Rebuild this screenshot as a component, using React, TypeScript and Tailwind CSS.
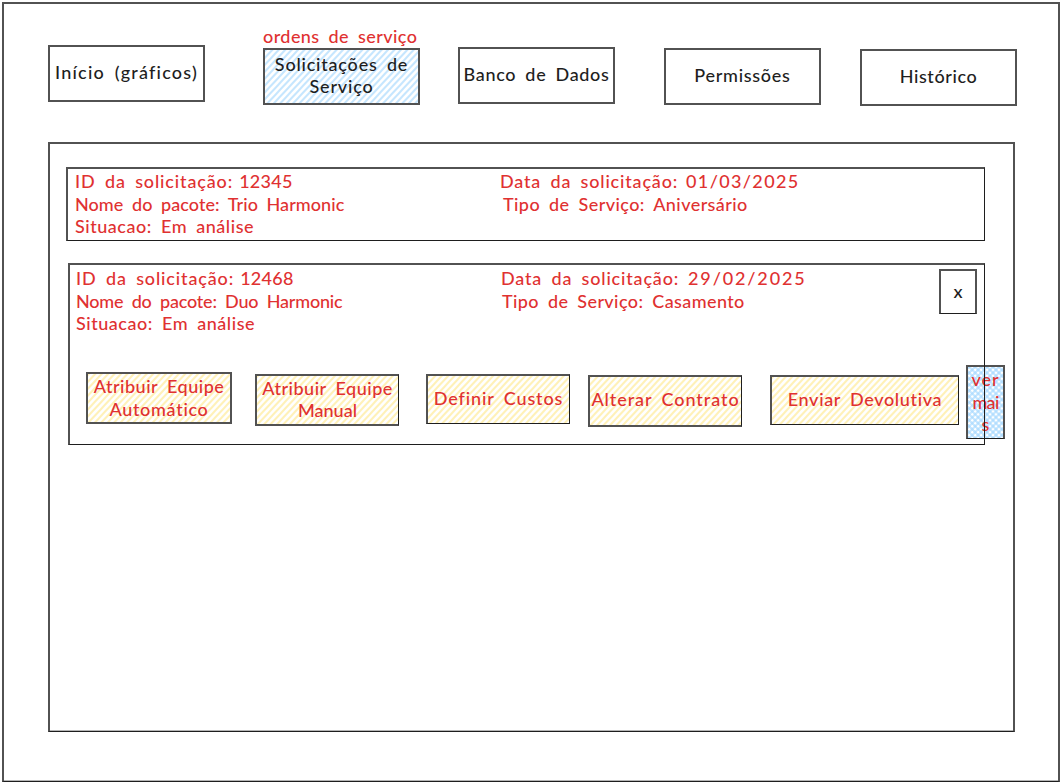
import type { ReactNode } from 'react';

const blueHatch =
  'bg-[repeating-linear-gradient(133deg,#c6e6fe_0px,#c6e6fe_1.1px,#ffffff_2.1px,#ffffff_3.7px,#c6e6fe_4.7px)]';
const yellowHatch =
  'bg-[repeating-linear-gradient(133deg,#fff1b8_0px,#fff1b8_1.1px,#ffffff_2.1px,#ffffff_3.7px,#fff1b8_4.7px)]';
const blueCrossHatch =
  'bg-[repeating-linear-gradient(135deg,#a5d8ffa0_0px,#a5d8ffa0_1.5px,transparent_2.2px,transparent_3.6px,#a5d8ffa0_4.2px),repeating-linear-gradient(45deg,#a5d8ffa0_0px,#a5d8ffa0_1.5px,transparent_2.2px,transparent_3.6px,#a5d8ffa0_4.2px)]';

function Box({ className, children }: { className: string; children: ReactNode }) {
  return (
    <button
      type="button"
      className={`flex shrink-0 flex-col items-center justify-center whitespace-nowrap border-2 border-[#525252] [word-spacing:4px] ${className}`}
    >
      {children}
    </button>
  );
}

type RequestProps = {
  id: ReactNode;
  pack: ReactNode;
  date: ReactNode;
  service: ReactNode;
};

function RequestInfo({ id, pack, date, service }: RequestProps) {
  return (
    <div className="flex whitespace-nowrap pt-px text-[#e03131]">
      <div className="w-[425px] shrink-0">
        <p className="flex gap-[6px]">
          <span className="tracking-[0.86px]">ID da solicitação:</span>
          {id}
        </p>
        <p>{pack}</p>
        <p className="tracking-[0.54px]">Situacao: Em análise</p>
      </div>
      <div>
        <p className="flex gap-[8px]">
          <span className="tracking-[0.82px]">Data da solicitação:</span>
          {date}
        </p>
        {service}
      </div>
    </div>
  );
}

export default function App() {
  return (
    <div className="h-[783px] w-[1060px] overflow-hidden bg-white pl-[2px] pt-[2px] font-['Lato','Noto_Sans',sans-serif] text-[18px] font-medium leading-[22.5px] text-[#1e1e1e] [word-spacing:4px]">
      <main className="h-[780px] w-[1058px] border-2 border-b border-[#525252] border-b-[#1e1e1e] pl-[44px] shadow-[inset_0_-1px_#b5b5b5]">
        <nav className="flex h-[138px] items-start">
          <Box className="mt-[41px] h-[57px] w-[157px] pb-[3px]">
            <span className="tracking-[1.2px]">Início (gráficos)</span>
          </Box>
          <div className="ml-[58px] mt-[21px] w-[157px] whitespace-nowrap">
            <p className="h-[23px] tracking-[0.42px] text-[#e03131]">ordens de serviço</p>
            <Box className={`h-[57px] w-[157px] pb-[3px] ${blueHatch}`}>
              <span className="tracking-[0.79px]">Solicitações de</span>
              <span className="tracking-[0.83px]">Serviço</span>
            </Box>
          </div>
          <Box className="ml-[38px] mt-[43px] h-[57px] w-[157px] pb-[3px]">
            <span className="tracking-[0.66px]">Banco de Dados</span>
          </Box>
          <Box className="ml-[49px] mt-[44px] h-[57px] w-[157px] pb-[3px]">
            <span className="tracking-[0.72px]">Permissões</span>
          </Box>
          <Box className="ml-[39px] mt-[45px] h-[57px] w-[157px] pb-[3px]">
            <span className="tracking-[0.6px]">Histórico</span>
          </Box>
        </nav>

        <section className="isolate h-[590px] w-[967px] border-2 border-b border-[#525252] border-b-[#1e1e1e] pt-[23px] shadow-[inset_0_-1px_#b5b5b5]">
          <article className="ml-[16px] h-[74px] w-[919px] border border-l-2 border-t-2 border-[#1e1e1e] border-l-[#525252] border-t-[#525252] pl-[7px]">
            <RequestInfo
              id={<span className="tracking-[0.3px]">12345</span>}
              pack={<span className="tracking-[0.06px]">Nome do pacote: Trio Harmonic</span>}
              date={<span className="tracking-[1.35px]">01/03/2025</span>}
              service={<p className="pl-[3px] tracking-[0.43px]">Tipo de Serviço: Aniversário</p>}
            />
          </article>

          <article className="ml-[18px] mt-[22px] h-[182px] w-[917px] border border-l-2 border-t-2 border-[#1e1e1e] border-l-[#525252] border-t-[#525252]">
            <div className="flex h-[100px] items-start justify-between pl-[6px] pr-[7px] pt-[1px]">
              <RequestInfo
                id={<span className="tracking-[0.3px]">12468</span>}
                pack={<span className="tracking-[-0.2px]">Nome do pacote: Duo Harmonic</span>}
                date={<span className="pl-px tracking-[1.85px]">29/02/2025</span>}
                service={<p className="pl-px tracking-[0.4px]">Tipo de Serviço: Casamento</p>}
              />
              <Box className="mt-[3px] h-[45px] w-[38px] border-b border-b-[#1e1e1e] pb-[2px]">
                <span>x</span>
              </Box>
            </div>
            <div className="flex items-start pl-[16px] text-[#e03131]">
              <Box className={`mt-[7px] h-[52px] w-[146px] pb-px ${yellowHatch}`}>
                <span className="tracking-[0.53px]">Atribuir Equipe</span>
                <span className="tracking-[0.7px]">Automático</span>
              </Box>
              <Box className={`ml-[23px] mt-[9px] h-[52px] w-[144px] border-r border-r-[#1e1e1e] pb-[2px] ${yellowHatch}`}>
                <span className="tracking-[0.53px]">Atribuir Equipe</span>
                <span className="tracking-[0px]">Manual</span>
              </Box>
              <Box className={`ml-[27px] mt-[9px] h-[50px] w-[144px] border-b border-r border-b-[#1e1e1e] border-r-[#1e1e1e] pb-[2px] ${yellowHatch}`}>
                <span className="tracking-[0.88px]">Definir Custos</span>
              </Box>
              <Box className={`ml-[18px] mt-[10px] h-[52px] w-[154px] border-r border-r-[#1e1e1e] pb-[4px] ${yellowHatch}`}>
                <span className="tracking-[0.93px]">Alterar Contrato</span>
              </Box>
              <Box className={`ml-[28px] mt-[10px] h-[50px] w-[189px] border-b border-r border-b-[#1e1e1e] border-r-[#1e1e1e] pb-[2px] ${yellowHatch}`}>
                <span className="tracking-[0.67px]">Enviar Devolutiva</span>
              </Box>
              <div className="relative -z-10 ml-[7px]">
                <Box className={`h-[74px] w-[39px] border-b border-b-[#1e1e1e] pb-px ${blueCrossHatch}`}>
                  <span className="tracking-[0.9px]">ver</span>
                  <span className="tracking-[-0.7px]">mai</span>
                  <span>s</span>
                </Box>
              </div>
            </div>
          </article>
        </section>
      </main>
    </div>
  );
}
